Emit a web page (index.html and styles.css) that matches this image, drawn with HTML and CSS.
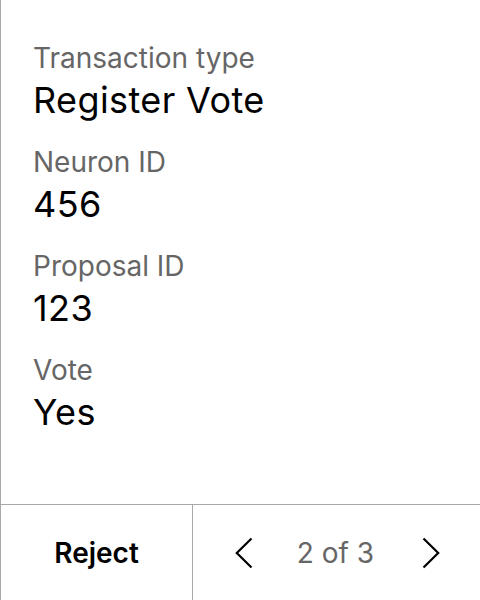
FILE: index.html
```html
<!DOCTYPE html>
<html>
<head>
<meta charset="utf-8">
<link rel="stylesheet" href="styles.css">
</head>
<body>
<div class="screen">
  <div class="fields">
    <div class="field">
      <div class="label">Transaction type</div>
      <div class="value">Register Vote</div>
    </div>
    <div class="field">
      <div class="label">Neuron ID</div>
      <div class="value">456</div>
    </div>
    <div class="field">
      <div class="label">Proposal ID</div>
      <div class="value">123</div>
    </div>
    <div class="field">
      <div class="label">Vote</div>
      <div class="value">Yes</div>
    </div>
  </div>
  <div class="footer">
    <div class="reject">Reject</div>
    <div class="pager">
      <svg class="chev" width="18" height="32" viewBox="0 0 18 32"><polyline points="16.5,1.5 1.8,16 16.5,30.5" fill="none" stroke="#000" stroke-width="2.2"/></svg>
      <span class="count">2 of 3</span>
      <svg class="chev" width="18" height="32" viewBox="0 0 18 32"><polyline points="1.5,1.5 16.2,16 1.5,30.5" fill="none" stroke="#000" stroke-width="2.2"/></svg>
    </div>
  </div>
</div>
</body>
</html>
```
FILE: styles.css
```css
html, body {
  margin: 0;
  padding: 0;
  background: #fff;
}
body {
  font-family: Inter, "Noto Sans", sans-serif;
  color: #000;
}
.screen {
  width: 479px;
  height: 600px;
  border-left: 1px solid #a8a8a8;
  display: flex;
  flex-direction: column;
}
.fields {
  flex: 1;
  padding: 40px 0 0 32px;
  display: flex;
  flex-direction: column;
  gap: 21px;
}
.field {
  display: flex;
  flex-direction: column;
  gap: 2px;
}
.label {
  font-size: 28px;
  line-height: 36px;
  color: #666;
}
.value {
  font-size: 36px;
  line-height: 45px;
  letter-spacing: 0.4px;
  color: #000;
}
.footer {
  height: 95px;
  border-top: 1px solid #a8a8a8;
  display: flex;
}
.reject {
  width: 191px;
  border-right: 1px solid #a8a8a8;
  display: flex;
  align-items: center;
  justify-content: center;
  font-size: 28px;
  font-weight: 600;
}
.pager {
  flex: 1;
  display: flex;
  align-items: center;
  justify-content: center;
  padding-left: 2px;
}
.count {
  font-size: 28px;
  color: #666;
  margin: 0 48px 0 44px;
}
.chev {
  display: block;
}
```
